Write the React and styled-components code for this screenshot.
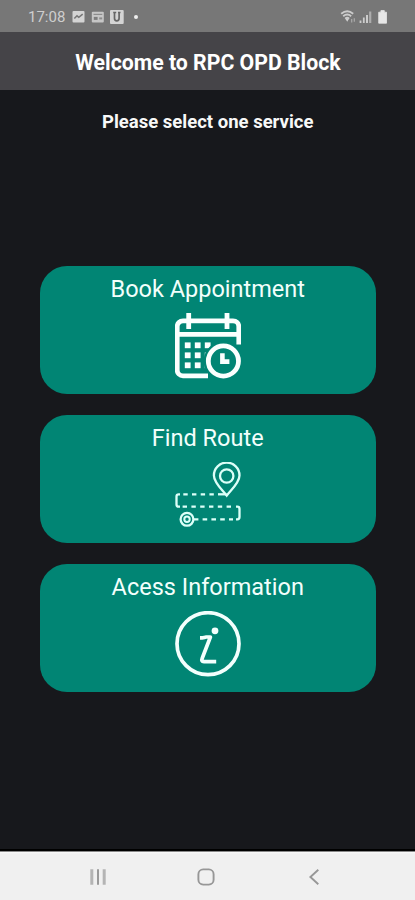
import React from "react";
import styled, { createGlobalStyle } from "styled-components";

const services = [
    { name: "Book Appointment", icon: <CalendarIcon /> },
    { name: "Find Route", icon: <RouteIcon /> },
    { name: "Acess Information", icon: <InfoIcon /> },
];

function CalendarIcon() {
    return (
        <svg width="66" height="66" viewBox="0 0 66 66" fill="none" stroke="#fbfffe" strokeWidth="4.8">
            <path d="M33 62.8H8a5.8 5.8 0 0 1-5.8-5.8V13.6A5.8 5.8 0 0 1 8 7.8h50a5.8 5.8 0 0 1 5.8 5.8v18" />
            <path d="M2 21.3h62" />
            <path d="M13.7 0v16M52 0v16" />
            <g fill="#fbfffe" stroke="none">
                {[32.3, 42.3, 52.3].map((y) => [12.7, 22.7, 32.7].map((x) => (
                    <rect key={x + "-" + y} x={x - 2.9} y={y - 2.9} width="5.8" height="5.8" />
                )))}
            </g>
            <circle cx="48.4" cy="48" r="18" fill="#018574" stroke="#018574" strokeWidth="3.4" />
            <circle cx="48.4" cy="48" r="15.1" />
            <path d="M47.4 40.2v8.4h7" strokeWidth="4.6" />
        </svg>
    );
}

function RouteIcon() {
    return (
        <svg width="66" height="66" viewBox="0 0 66 66" fill="none" stroke="#dcfff8" strokeWidth="2.3">
            <path d="M51.7 33.6C47 27.5 38.9 20.5 38.9 13.4a12.8 12.8 0 0 1 25.6 0c0 7.1-8.1 14.1-12.8 20.2z" />
            <circle cx="51.7" cy="14" r="6.7" />
            <path d="M5 32.3H3.6Q1.5 32.3 1.5 34.5v8q0 2.2 2.1 2.2H5" />
            <path d="M61 44.7h1.4q2.1 0 2.1 2.2v8.2q0 2.2-2.1 2.2H61" />
            <path d="M8.3 32.3H43" strokeDasharray="4.4 4.3" />
            <path d="M43 32.3h8.5" />
            <path d="M7.6 44.7H58" strokeDasharray="4.4 4.4" />
            <path d="M19 57.3h4.4M27.6 57.3H58" strokeDasharray="4.6 4.2" />
            <circle cx="12" cy="57.3" r="6.4" />
            <circle cx="12" cy="57.3" r="2.7" strokeWidth="2" />
        </svg>
    );
}

function InfoIcon() {
    return (
        <svg width="66" height="66" viewBox="0 0 66 66" fill="none" stroke="#f3fffd" strokeWidth="3.7">
            <circle cx="33" cy="32.7" r="31" />
            <circle cx="40" cy="19.8" r="3.4" fill="#f3fffd" stroke="none" />
            <path d="M25 26.8h2.2q2.6 0 3.8-.8h4.4l-8.1 21q-1.4 3.7 1.6 3.7h12.3" strokeLinejoin="round" />
        </svg>
    );
}

function StatusBar() {
    return (
        <StatusRow>
            <Clock>17:08</Clock>
            <svg width="70" height="16" viewBox="0 0 70 16" fill="#d4d4d4">
                <rect x="0.5" y="2" width="12" height="11.5" rx="1" />
                <path d="M2.3 9.5l2.7-2.7 1.8 1.5 3.9-3.2" fill="none" stroke="#777" strokeWidth="1.6" />
                <rect x="19.8" y="2.8" width="12" height="10.7" rx="1" fill="#c6c6c6" />
                <path d="M21.5 5.4h8.8" stroke="#8c8c8c" strokeWidth="1.2" />
                <path d="M21.8 9.4h3.8" stroke="#7d7d7d" strokeWidth="3" />
                <path d="M27.2 9.4h3" stroke="#8c8c8c" strokeWidth="2" />
                <rect x="38" y="1" width="13.7" height="14" rx="1" />
                <path d="M41.2 3.5h3M42.5 3.5v5.8q0 2.5 2.3 2.5t2.3-2.5V3.5M46 3.5h2.5" fill="none" stroke="#666" strokeWidth="1.7" />
                <circle cx="64" cy="8" r="2" fill="#eee" />
            </svg>
            <Spacer />
            <svg width="49" height="16" viewBox="0 0 49 16" fill="none" stroke="#cccccc">
                <path d="M1.2 4.8q6-5 12 0M3.2 7.2q4-3.4 8 0M5.2 9.6q2-1.7 4 0" strokeWidth="1.8" />
                <path d="M5.2 9.6h4L7.2 12.8z" fill="#d2d2d2" stroke="none" />
                <path d="M11.7 10v3.4M14.3 9.3v3.4" stroke="#aaa" strokeWidth="1.2" />
                <path d="M20.5 11.5V14M23.8 8.5V14" strokeWidth="1.8" />
                <path d="M27 6v8" strokeWidth="2" />
                <path d="M30.2 2.5V14" stroke="#adadad" strokeWidth="2.2" />
                <path d="M38.7 3.2h2.2V1.6h3.4v1.6h2.2v11h-7.8z" fill="#e6e6e6" stroke="#e6e6e6" strokeWidth="0.8" />
            </svg>
        </StatusRow>
    );
}

function App() {
    return (
        <>
            <GlobalStyle />
            <Screen>
                <StatusBar />
                <Header>Welcome to RPC OPD Block</Header>
                <Content>
                    <Prompt>Please select one service</Prompt>
                    <ServiceList>
                        {services.map((service) => (
                            <ServiceButton key={service.name} type="button">
                                <ServiceName>{service.name}</ServiceName>
                                {service.icon}
                            </ServiceButton>
                        ))}
                    </ServiceList>
                </Content>
                <NavBar>
                    <svg width="18" height="18" viewBox="0 0 18 18" stroke="#999">
                        <path d="M2.8 1.3v15.4M15.2 1.3v15.4" stroke="#b4b4b4" strokeWidth="3" />
                        <path d="M9 1.3v15.4" strokeWidth="2" />
                    </svg>
                    <svg width="18" height="18" viewBox="0 0 18 18" fill="none" stroke="#979797" strokeWidth="1.9">
                        <rect x="1.4" y="1.4" width="15.2" height="15.2" rx="4.8" />
                    </svg>
                    <svg width="18" height="18" viewBox="0 0 18 18" fill="none" stroke="#979797" strokeWidth="1.9">
                        <path d="M13.3 1.8L5.4 9l7.9 7.2" />
                    </svg>
                </NavBar>
            </Screen>
        </>
    );
}

const GlobalStyle = createGlobalStyle`
    * {
        box-sizing: border-box;
    }

    body {
        margin: 0;
        background-color: #17181c;
        font-family: Roboto, sans-serif;
    }
`;

const Screen = styled.div`
    display: flex;
    flex-direction: column;
    height: 900px;
    background-color: #17181c;
`;

const StatusRow = styled.div`
    display: flex;
    align-items: center;
    flex-shrink: 0;
    height: 32px;
    padding: 1px 26px 0 28px;
    background-color: #777777;
`;

const Clock = styled.span`
    width: 44px;
    font-size: 15px;
    color: #cecece;
`;

const Spacer = styled.div`
    flex: 1;
`;

const Header = styled.h1`
    display: flex;
    align-items: center;
    justify-content: center;
    flex-shrink: 0;
    height: 58px;
    margin: 0;
    padding: 2px 0 0 1px;
    background-color: #454448;
    color: #ffffff;
    font-size: 21.25px;
    font-weight: 700;
    white-space: nowrap;
`;

const Content = styled.main`
    flex: 1;
    padding: 20px 39.5px 0 40px;
`;

const Prompt = styled.h2`
    margin: 0;
    line-height: 24px;
    text-align: center;
    color: #f8f8f8;
    font-size: 18.5px;
    font-weight: 700;
`;

const ServiceList = styled.div`
    display: flex;
    flex-direction: column;
    gap: 20.4px;
    margin-top: 132px;
`;

const ServiceButton = styled.button`
    display: flex;
    flex-direction: column;
    align-items: center;
    height: 128.4px;
    padding: 9px 0 0;
    border: none;
    border-radius: 27px;
    background-color: #018574;
    font-family: inherit;
`;

const ServiceName = styled.span`
    height: 38px;
    line-height: 28px;
    font-size: 23.5px;
    color: #f2fffc;
`;

const NavBar = styled.nav`
    display: flex;
    justify-content: center;
    gap: 90px;
    flex-shrink: 0;
    height: 51px;
    padding-top: 17px;
    padding-right: 3px;
    border-top: 2px solid #000000;
    background: linear-gradient(#888888 1px, #fafafa 1px, #f0f0f0 3px);
`;

export default App;
